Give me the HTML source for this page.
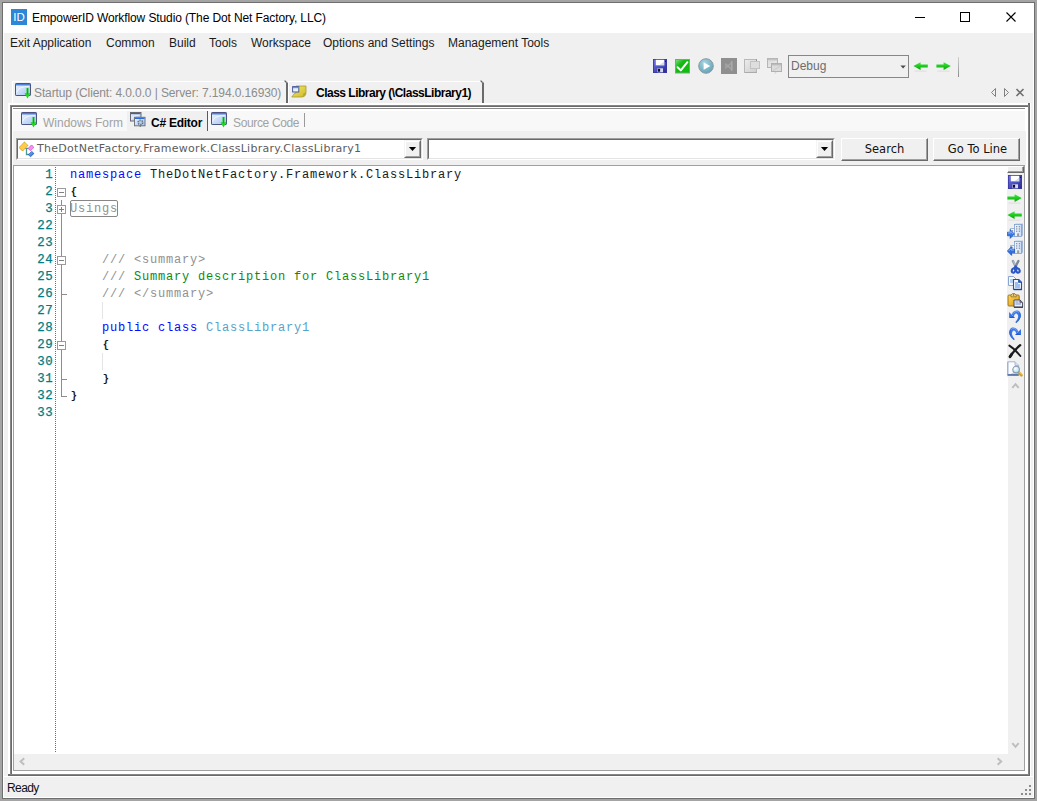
<!DOCTYPE html>
<html lang="en">
<head>
<meta charset="utf-8">
<title>EmpowerID Workflow Studio</title>
<style>
html,body{margin:0;padding:0;}
body{width:1037px;height:801px;overflow:hidden;background:#a4a4a4;position:relative;font-family:"Liberation Sans",sans-serif;font-size:12px;color:#000;}
.a{position:absolute;}
.t{position:absolute;white-space:nowrap;line-height:16px;}
#win{left:2px;top:2px;width:1033px;height:797px;background:#6e6e6e;}
#cli{left:3px;top:3px;width:1031px;height:795px;background:#fff;}
#bg{left:4px;top:33px;width:1029px;height:764px;background:#f0f0f0;}
.ui{font-family:"Liberation Sans",sans-serif;font-size:12px;}
.menu{top:35px;color:#1b1b1b;}
.code{font-family:"Liberation Mono",monospace;font-size:12px;letter-spacing:0.8px;line-height:17px;padding-top:1px;box-sizing:border-box;white-space:pre;position:absolute;left:70px;color:#1a1a1a;height:17px;}
.ln{font-family:"Liberation Mono",monospace;font-size:12.4px;letter-spacing:0.55px;line-height:17px;position:absolute;left:14px;width:39.3px;text-align:right;color:#007c82;height:17px;padding-top:1px;box-sizing:border-box;-webkit-text-stroke:0.25px #007c82;}
.br{display:inline-block;width:8px;font-size:10.5px;letter-spacing:0;text-align:center;position:relative;top:-0.5px;font-weight:bold;}
.kw{color:#0808ff;}
.cm{color:#919191;}
.gr{color:#0f8a0f;}
.ty{color:#58a2ca;}
.vd{font-family:"DejaVu Sans",sans-serif;}
</style>
</head>
<body>
<div id="win" class="a"></div>
<div id="cli" class="a"></div>
<div id="bg" class="a"></div>

<!-- title bar -->
<div class="a" style="left:11px;top:9px;width:16px;height:16px;background:#2d86d6;"></div>
<div class="t" style="left:12px;top:9px;width:14px;text-align:center;color:#fff;font-size:11.5px;line-height:17px;letter-spacing:0px;">ID</div>
<div class="t ui" id="title" style="left:32px;top:10px;letter-spacing:-0.11px;">EmpowerID Workflow Studio (The Dot Net Factory, LLC)</div>
<svg class="a" style="left:910px;top:7px;" width="112" height="22" viewBox="0 0 112 22">
 <path d="M5 10.5H15" stroke="#000" stroke-width="1" fill="none"/>
 <rect x="50.5" y="5.5" width="9" height="9" stroke="#000" stroke-width="1" fill="none"/>
 <path d="M96.5 5.5L105.5 14.5M105.5 5.5L96.5 14.5" stroke="#000" stroke-width="1.1" fill="none"/>
</svg>

<!-- menu -->
<div class="t ui menu" style="left:10px;">Exit Application</div>
<div class="t ui menu" style="left:106px;">Common</div>
<div class="t ui menu" style="left:169px;">Build</div>
<div class="t ui menu" style="left:209px;">Tools</div>
<div class="t ui menu" style="left:251px;">Workspace</div>
<div class="t ui menu" style="left:323px;">Options and Settings</div>
<div class="t ui menu" style="left:448px;">Management Tools</div>


<!-- outer document tab strip -->
<div class="a" style="left:12px;top:81px;width:274px;height:22px;background:#f2f2f2;border-left:1px solid #fff;border-top:1px solid #fff;box-sizing:border-box;"></div>
<div class="a" style="left:288px;top:81px;width:194px;height:22px;border-left:1px solid #fff;border-top:1px solid #fff;box-sizing:border-box;"></div>
<svg class="a" style="left:283px;top:79px;" width="6" height="25" viewBox="0 0 6 25"><path d="M1.6 1.6L3.6 3.6" stroke="#5a5a5a" stroke-width="1.3" fill="none"/><path d="M4 3.4V24" stroke="#6a6a6a" stroke-width="2" fill="none"/></svg>
<svg class="a" style="left:479px;top:79px;" width="6" height="25" viewBox="0 0 6 25"><path d="M1.6 1.6L3.6 3.6" stroke="#5a5a5a" stroke-width="1.3" fill="none"/><path d="M4 3.4V24" stroke="#6a6a6a" stroke-width="2" fill="none"/></svg>
<div class="t ui" id="tab1" style="left:34px;top:85px;color:#8c8c8c;letter-spacing:-0.11px;">Startup (Client: 4.0.0.0 | Server: 7.194.0.16930)</div>
<div class="t ui" id="tab2" style="left:316px;top:85px;font-weight:bold;color:#000;letter-spacing:-0.5px;">Class Library (\ClassLibrary1)</div>
<svg class="a" style="left:988px;top:86px;" width="40" height="14" viewBox="0 0 40 14">
 <path d="M7.5 2.5L3.5 6.5L7.5 10.5Z" stroke="#808080" stroke-width="1" fill="none"/>
 <path d="M16.5 2.5L20.5 6.5L16.5 10.5Z" stroke="#808080" stroke-width="1" fill="none"/>
 <path d="M28.5 3L35.5 10M35.5 3L28.5 10" stroke="#707070" stroke-width="1.6" fill="none"/>
</svg>

<!-- frames -->
<div class="a" style="left:8px;top:103px;width:1023px;height:674px;background:#fff;"></div>
<div class="a" style="left:10px;top:105px;width:1020px;height:671px;background:#6a6a6a;"></div>
<div class="a" style="left:10px;top:105px;width:1px;height:670px;background:#868686;"></div>
<div class="a" style="left:10px;top:105px;width:1019px;height:1px;background:#868686;"></div>
<div class="a" style="left:1028px;top:106px;width:1px;height:669px;background:#868686;"></div>
<div class="a" style="left:11px;top:774px;width:1018px;height:1px;background:#868686;"></div>
<div class="a" style="left:12px;top:107px;width:1016px;height:667px;background:#fff;"></div>
<div class="a" style="left:1028px;top:103px;width:2px;height:2px;background:#6e6e6e;"></div>
<div class="a" style="left:8px;top:774px;width:2px;height:2px;background:#6e6e6e;"></div>
<div class="a" style="left:13px;top:108px;width:1012px;height:1px;background:#8a8a8a;"></div>
<div class="a" style="left:13px;top:111px;width:1012px;height:20px;background:#f8f8f8;"></div>
<div class="a" style="left:13px;top:131px;width:1013px;height:34px;background:#f0f0f0;"></div>
<div class="a" style="left:13px;top:165px;width:1012px;height:606px;background:#a0a0a0;"></div>
<div class="a" style="left:14px;top:166px;width:1010px;height:604px;background:#fff;"></div>
<div class="a" style="left:1008px;top:166px;width:16px;height:604px;background:#f0f0f0;"></div>
<div class="a" style="left:1007px;top:166px;width:17px;height:211px;background:#f0f0f0;"></div>
<div class="a" style="left:14px;top:754px;width:1010px;height:16px;background:#f0f0f0;"></div>

<!-- inner tabs -->
<div class="a" style="left:127px;top:111px;width:80px;height:20px;background:#f0f0f0;"></div>
<div class="a" style="left:207px;top:111px;width:1px;height:20px;background:#5a5a5a;"></div>
<div class="a" style="left:304px;top:113px;width:1px;height:14px;background:#9a9a9a;"></div>
<div class="t ui" id="it1" style="left:43px;top:115px;color:#a2a2a2;">Windows Form</div>
<div class="t ui" id="it2" style="left:151px;top:115px;font-weight:bold;color:#000;letter-spacing:-0.25px;">C# Editor</div>
<div class="t ui" id="it3" style="left:233px;top:115px;color:#a2a2a2;letter-spacing:-0.35px;">Source Code</div>


<!-- combos & buttons -->
<div class="a" style="left:16px;top:138px;width:407px;height:22px;background:#fff;box-sizing:border-box;border-top:1px solid #a0a0a0;border-left:1px solid #a0a0a0;border-right:1px solid #fff;border-bottom:1px solid #fff;"></div>
<div class="a" style="left:17px;top:139px;width:405px;height:20px;background:#fff;box-sizing:border-box;border-top:1px solid #696969;border-left:1px solid #696969;border-right:1px solid #e3e3e3;border-bottom:1px solid #e3e3e3;"></div>
<div class="a" style="left:404px;top:140px;width:17px;height:18px;background:#f0f0f0;box-sizing:border-box;border-top:1px solid #f4f4f4;border-left:1px solid #f4f4f4;border-right:1px solid #696969;border-bottom:1px solid #696969;"></div>
<div class="a" style="left:405px;top:141px;width:15px;height:16px;box-sizing:border-box;border-top:1px solid #fff;border-left:1px solid #fff;border-right:1px solid #a0a0a0;border-bottom:1px solid #a0a0a0;"></div>
<svg class="a" style="left:408px;top:146px;" width="9" height="6" viewBox="0 0 9 6"><path d="M0.9 1H8.1L4.5 5Z" fill="#000"/></svg>
<div class="t vd" id="cb1" style="left:37px;top:141px;font-size:11px;letter-spacing:0.28px;color:#5c5c5c;">TheDotNetFactory.Framework.ClassLibrary.ClassLibrary1</div>

<div class="a" style="left:427px;top:138px;width:408px;height:22px;background:#fff;box-sizing:border-box;border-top:1px solid #a0a0a0;border-left:1px solid #a0a0a0;border-right:1px solid #fff;border-bottom:1px solid #fff;"></div>
<div class="a" style="left:428px;top:139px;width:406px;height:20px;background:#fff;box-sizing:border-box;border-top:1px solid #696969;border-left:1px solid #696969;border-right:1px solid #e3e3e3;border-bottom:1px solid #e3e3e3;"></div>
<div class="a" style="left:816px;top:140px;width:17px;height:18px;background:#f0f0f0;box-sizing:border-box;border-top:1px solid #f4f4f4;border-left:1px solid #f4f4f4;border-right:1px solid #696969;border-bottom:1px solid #696969;"></div>
<div class="a" style="left:817px;top:141px;width:15px;height:16px;box-sizing:border-box;border-top:1px solid #fff;border-left:1px solid #fff;border-right:1px solid #a0a0a0;border-bottom:1px solid #a0a0a0;"></div>
<svg class="a" style="left:820px;top:146px;" width="9" height="6" viewBox="0 0 9 6"><path d="M0.9 1H8.1L4.5 5Z" fill="#000"/></svg>

<div class="a" style="left:841px;top:138px;width:87px;height:23px;background:#f0f0f0;box-sizing:border-box;border-top:1px solid #fff;border-left:1px solid #fff;border-right:1px solid #696969;border-bottom:1px solid #696969;"></div>
<div class="a" style="left:842px;top:139px;width:85px;height:21px;box-sizing:border-box;border-right:1px solid #a0a0a0;border-bottom:1px solid #a0a0a0;"></div>
<div class="t vd" id="b1" style="left:841px;top:141px;width:87px;text-align:center;font-size:11.5px;color:#111;"><span id="s1">Search</span></div>
<div class="a" style="left:933px;top:138px;width:87px;height:23px;background:#f0f0f0;box-sizing:border-box;border-top:1px solid #fff;border-left:1px solid #fff;border-right:1px solid #696969;border-bottom:1px solid #696969;"></div>
<div class="a" style="left:934px;top:139px;width:85px;height:21px;box-sizing:border-box;border-right:1px solid #a0a0a0;border-bottom:1px solid #a0a0a0;"></div>
<div class="t vd" id="b2" style="left:934px;top:141px;width:87px;text-align:center;font-size:11.5px;color:#111;"><span id="s2">Go To Line</span></div>

<!-- editor -->
<div class="a" style="left:55px;top:167px;width:1px;height:586px;background:repeating-linear-gradient(to bottom,#1f8f95 0,#1f8f95 1px,#fff 1px,#fff 2px);"></div>
<div class="a" style="left:61px;top:200px;width:1px;height:197px;background:#8c8c8c;"></div>
<div class="a" style="left:61px;top:396px;width:6px;height:1px;background:#8c8c8c;"></div>
<div class="a" style="left:61px;top:294px;width:6px;height:1px;background:#8c8c8c;"></div>
<div class="a" style="left:61px;top:379px;width:6px;height:1px;background:#8c8c8c;"></div>
<div class="a" style="left:102px;top:302px;width:1px;height:17px;background:#e4e4e4;"></div>
<div class="a" style="left:102px;top:353px;width:1px;height:17px;background:#e4e4e4;"></div>
<svg class="a" style="left:57px;top:188px;" width="9" height="9" viewBox="0 0 9 9"><rect x="0.5" y="0.5" width="8" height="8" fill="#fff" stroke="#9a9a9a"/><path d="M2 4.5H7" stroke="#808080" stroke-width="1" fill="none"/></svg>
<svg class="a" style="left:57px;top:205px;" width="9" height="9" viewBox="0 0 9 9"><rect x="0.5" y="0.5" width="8" height="8" fill="#fff" stroke="#9a9a9a"/><path d="M2 4.5H7M4.5 2V7" stroke="#808080" stroke-width="1" fill="none"/></svg>
<svg class="a" style="left:57px;top:256px;" width="9" height="9" viewBox="0 0 9 9"><rect x="0.5" y="0.5" width="8" height="8" fill="#fff" stroke="#9a9a9a"/><path d="M2 4.5H7" stroke="#808080" stroke-width="1" fill="none"/></svg>
<svg class="a" style="left:57px;top:341px;" width="9" height="9" viewBox="0 0 9 9"><rect x="0.5" y="0.5" width="8" height="8" fill="#fff" stroke="#9a9a9a"/><path d="M2 4.5H7" stroke="#808080" stroke-width="1" fill="none"/></svg>
<div class="ln" style="top:166px;">1</div>
<div class="code" style="top:166px;"><span class="kw">namespace</span> TheDotNetFactory.Framework.ClassLibrary</div>
<div class="ln" style="top:183px;">2</div>
<div class="code" style="top:183px;"><span class="br">{</span></div>
<div class="ln" style="top:200px;">3</div>
<div class="ln" style="top:217px;">22</div>
<div class="ln" style="top:234px;">23</div>
<div class="ln" style="top:251px;">24</div>
<div class="code" style="top:251px;">    <span class="cm">/// &lt;summary&gt;</span></div>
<div class="ln" style="top:268px;">25</div>
<div class="code" style="top:268px;">    <span class="cm">///</span><span class="gr"> Summary description for ClassLibrary1</span></div>
<div class="ln" style="top:285px;">26</div>
<div class="code" style="top:285px;">    <span class="cm">/// &lt;/summary&gt;</span></div>
<div class="ln" style="top:302px;">27</div>
<div class="ln" style="top:319px;">28</div>
<div class="code" style="top:319px;">    <span class="kw">public class</span> <span class="ty">ClassLibrary1</span></div>
<div class="ln" style="top:336px;">29</div>
<div class="code" style="top:336px;">    <span class="br">{</span></div>
<div class="ln" style="top:353px;">30</div>
<div class="ln" style="top:370px;">31</div>
<div class="code" style="top:370px;">    <span class="br">}</span></div>
<div class="ln" style="top:387px;">32</div>
<div class="code" style="top:387px;"><span class="br">}</span></div>
<div class="ln" style="top:404px;">33</div>
<div class="a" style="left:70px;top:200px;width:48px;height:17px;box-sizing:border-box;border:1px solid #868686;border-radius:2px;"></div>
<div class="code cm" style="top:200px;left:70px;">Usings</div>
<svg class="a" style="left:1007px;top:377px;" width="17" height="17" viewBox="0 0 17 17"><path d="M5.3 10.8L8.5 7.2L11.7 10.8" stroke="#bebebe" stroke-width="2" fill="none"/></svg>
<svg class="a" style="left:1007px;top:736px;" width="17" height="17" viewBox="0 0 17 17"><path d="M5.3 7.2L8.5 10.8L11.7 7.2" stroke="#bebebe" stroke-width="2" fill="none"/></svg>
<svg class="a" style="left:14px;top:753px;" width="17" height="17" viewBox="0 0 17 17"><path d="M10.2 5.3L6.6 8.5L10.2 11.7" stroke="#bebebe" stroke-width="2" fill="none"/></svg>
<svg class="a" style="left:991px;top:753px;" width="17" height="17" viewBox="0 0 17 17"><path d="M6.6 5.3L10.2 8.5L6.6 11.7" stroke="#bebebe" stroke-width="2" fill="none"/></svg>
<div class="a" style="left:1007px;top:166px;width:17px;height:7px;background:#f0f0f0;box-sizing:border-box;border-top:1px solid #fff;border-left:1px solid #fff;border-right:1px solid #696969;border-bottom:1px solid #696969;"></div>
<div class="a" style="left:1008px;top:167px;width:15px;height:5px;box-sizing:border-box;border-right:1px solid #a0a0a0;border-bottom:1px solid #a0a0a0;"></div>
<svg class="a" style="left:1020px;top:784px;" width="13" height="13" viewBox="0 0 13 13"><rect x="9" y="1" width="2" height="2" fill="#8c8c8c"/><rect x="11" y="3" width="1" height="1" fill="#fff" opacity="0"/><rect x="5" y="5" width="2" height="2" fill="#8c8c8c"/><rect x="7" y="7" width="1" height="1" fill="#fff" opacity="0"/><rect x="9" y="5" width="2" height="2" fill="#8c8c8c"/><rect x="11" y="7" width="1" height="1" fill="#fff" opacity="0"/><rect x="1" y="9" width="2" height="2" fill="#8c8c8c"/><rect x="3" y="11" width="1" height="1" fill="#fff" opacity="0"/><rect x="5" y="9" width="2" height="2" fill="#8c8c8c"/><rect x="7" y="11" width="1" height="1" fill="#fff" opacity="0"/><rect x="9" y="9" width="2" height="2" fill="#8c8c8c"/><rect x="11" y="11" width="1" height="1" fill="#fff" opacity="0"/></svg>

<!-- icons-start -->
<svg class="a" style="left:653px;top:59px;" width="14" height="14" viewBox="0 0 14 14"><defs><linearGradient id="g1" x1="0" y1="0" x2="1" y2="1"><stop offset="0" stop-color="#7878ea"/><stop offset="1" stop-color="#26268a"/></linearGradient></defs>
<rect x="0" y="0" width="14" height="14" fill="url(#g1)"/>
<rect x="0.4" y="0.4" width="13.2" height="13.2" fill="none" stroke="#3838a4" stroke-width=".8"/>
<rect x="2.8" y="0.8" width="8.4" height="5.8" fill="#fff"/>
<path d="M6 6.4L11.2 2.5V6.4Z" fill="#d4dcf0"/>
<rect x="2.8" y="6.5" width="8.4" height=".9" fill="#4466dc"/>
<rect x="4.4" y="9.3" width="5.6" height="4" fill="#d6d8e8"/>
<rect x="4.9" y="9.8" width="2.2" height="2.9" fill="#0c0c30"/>
<rect x="12" y="1.6" width="1" height="1.4" fill="#161658"/></svg>
<svg class="a" style="left:675px;top:58.5px;" width="15" height="15" viewBox="0 0 15 15"><defs><linearGradient id="g2" x1="0" y1="0" x2="1" y2="1"><stop offset="0" stop-color="#8be08b"/><stop offset=".35" stop-color="#14b814"/><stop offset="1" stop-color="#0bbf0b"/></linearGradient></defs>
<rect x="0.5" y="0.5" width="14" height="13.5" fill="url(#g2)" stroke="#6fae6f" stroke-width="1"/>
<path d="M2.6 8.2L5.8 11.4L12.4 3.2" stroke="#fff" stroke-width="2" fill="none" stroke-linecap="round" stroke-linejoin="round"/></svg>
<svg class="a" style="left:698px;top:58px;" width="16" height="16" viewBox="0 0 16 16"><defs><radialGradient id="g3" cx=".4" cy=".3" r=".8"><stop offset="0" stop-color="#a8d4e0"/><stop offset="1" stop-color="#5a9eb4"/></radialGradient></defs>
<circle cx="8" cy="8" r="7.3" fill="url(#g3)" stroke="#8a9aa2" stroke-width="1"/>
<path d="M5.6 4.2L12.2 8L5.6 11.8Z" fill="#fff"/></svg>
<svg class="a" style="left:721px;top:58px;" width="16" height="16" viewBox="0 0 16 16"><rect x="0" y="0" width="16" height="16" fill="#8f8f8f"/>
<path d="M9.8 2.8L11.6 3.6V12.4L9.8 13.2Z" fill="#a9a9a9"/>
<path d="M4.4 5.8L10 10.8M4.4 10.2L10 5.2" stroke="#a6a6a6" stroke-width="1.3" fill="none"/>
<path d="M4.4 5.6V10.4" stroke="#a0a0a0" stroke-width=".9" fill="none"/></svg>
<svg class="a" style="left:744px;top:59px;" width="17" height="15" viewBox="0 0 17 15"><defs><linearGradient id="g4" x1="0" y1="0" x2="1" y2="1"><stop offset="0" stop-color="#ededed"/><stop offset="1" stop-color="#cdcdcd"/></linearGradient></defs>
<rect x="0.5" y="0.5" width="12" height="13" fill="url(#g4)" stroke="#b8b8b8"/>
<rect x="1" y="13" width="12" height="1" fill="#ababab"/>
<rect x="12" y="0.4" width="1" height="2" fill="#8e8e8e"/>
<rect x="6.5" y="2.5" width="9" height="7" fill="#dedede" stroke="#c2c2c2"/></svg>
<svg class="a" style="left:767px;top:58px;" width="16" height="16" viewBox="0 0 16 16"><rect x="0.5" y="0.5" width="10" height="9" fill="#e0e0e0" stroke="#b6b6b6"/>
<rect x="1" y="1" width="9" height="1.4" fill="#c2c2c2"/>
<path d="M1.5 8L9 3.4" stroke="#ececec" stroke-width="1"/>
<rect x="4.5" y="5.5" width="10" height="8" fill="#dcdcdc" stroke="#b0b0b0"/>
<rect x="5" y="6" width="9" height="1.4" fill="#bcbcbc"/>
<path d="M6 12.5L13.4 8.2" stroke="#cacaca" stroke-width="1"/>
<path d="M7.6 15.4L9.4 14.2" stroke="#c8c8c8" stroke-width="1"/></svg>
<div class="a" style="left:788px;top:55px;width:121px;height:23px;box-sizing:border-box;border:1px solid #878787;background:#f0f0f0;"></div>
<div class="t ui" id="dbg" style="left:791px;top:58px;color:#6d6d6d;font-size:12px;">Debug</div>
<svg class="a" style="left:899.5px;top:64.6px;" width="7" height="5" viewBox="0 0 7 5"><path d="M0.4 0.5H5.8L3.1 3.6Z" fill="#4c4c4c"/></svg>
<svg class="a" style="left:912.8px;top:60.8px;" width="15.2" height="11" viewBox="0 0 15.2 11"><defs><linearGradient id="g5" x1="0" y1="0" x2="0" y2="1"><stop offset="0" stop-color="#3fe83f"/><stop offset=".5" stop-color="#1ccc1c"/><stop offset="1" stop-color="#0aa00a"/></linearGradient></defs>
<path d="M14.8 3.6H7.6V1.2L0.4 5L7.6 8.9V6.4H14.8Z" fill="url(#g5)"/>
<rect x="1.5" y="9.6" width="12" height="1" fill="#dcdcdc"/></svg>
<svg class="a" style="left:936px;top:60.8px;" width="15.2" height="11" viewBox="0 0 15.2 11"><defs><linearGradient id="g6" x1="0" y1="0" x2="0" y2="1"><stop offset="0" stop-color="#3fe83f"/><stop offset=".5" stop-color="#1ccc1c"/><stop offset="1" stop-color="#0aa00a"/></linearGradient></defs>
<path d="M0.4 3.6H7.6V1.2L14.8 5L7.6 8.9V6.4H0.4Z" fill="url(#g6)"/>
<rect x="1.5" y="9.6" width="12" height="1" fill="#dcdcdc"/></svg>
<div class="a" style="left:958px;top:57px;width:1px;height:20px;background:linear-gradient(#d0d0d0,#8c8c8c);"></div>
<svg class="a" style="left:15px;top:83px;" width="17" height="16" viewBox="0 0 17 16"><defs><linearGradient id="g7" x1="0" y1="0" x2="1" y2="1"><stop offset="0" stop-color="#f0f5fe"/><stop offset="1" stop-color="#a2c3f4"/></linearGradient></defs>
<rect x="0.5" y="0.5" width="15" height="12" rx="0.6" fill="url(#g7)" stroke="#4c5384"/>
<rect x="1" y="1" width="14" height="1.5" fill="#4d80da"/>
<path d="M1.6 9.6C2.6 5.4 7 3.6 14 3.4" stroke="#fff" stroke-opacity=".75" stroke-width="1" fill="none"/>
<path d="M11.5 5h2v5.3h2l-3 5.2l-3-5.2h2z" fill="#22d422"/>
<path d="M12.5 5.2v6" stroke="#10aa10" stroke-width="1.1"/></svg>
<svg class="a" style="left:291px;top:84.5px;" width="16" height="13" viewBox="0 0 16 13"><defs><linearGradient id="g8" x1="0" y1="0" x2="1" y2="1"><stop offset="0" stop-color="#f6ea6a"/><stop offset="1" stop-color="#cdb82a"/></linearGradient></defs>
<path d="M5 1H15V7.5C15 10.5 13 12 10.5 12H0.8L3.6 8.2H5Z" fill="url(#g8)" stroke="#a89a30" stroke-width=".8"/>
<path d="M10.5 12C12 11.2 12.6 10 12.4 8.6L15 7.5C15 10.5 13 12 10.5 12Z" fill="#b9a62c"/>
<rect x="1.6" y="1.6" width="6.2" height="5.4" fill="#e9f0fc" stroke="#4a5a9a" stroke-width="1"/>
<rect x="2" y="2" width="5.4" height="1.2" fill="#6c8cd8"/></svg>
<svg class="a" style="left:21px;top:112px;" width="17" height="16" viewBox="0 0 17 16"><defs><linearGradient id="g9" x1="0" y1="0" x2="1" y2="1"><stop offset="0" stop-color="#f0f5fe"/><stop offset="1" stop-color="#a2c3f4"/></linearGradient></defs>
<rect x="0.5" y="0.5" width="15" height="12" rx="0.6" fill="url(#g9)" stroke="#4c5384"/>
<rect x="1" y="1" width="14" height="1.5" fill="#4d80da"/>
<path d="M1.6 9.6C2.6 5.4 7 3.6 14 3.4" stroke="#fff" stroke-opacity=".75" stroke-width="1" fill="none"/>
<path d="M11.5 5h2v5.3h2l-3 5.2l-3-5.2h2z" fill="#22d422"/>
<path d="M12.5 5.2v6" stroke="#10aa10" stroke-width="1.1"/></svg>
<svg class="a" style="left:130.3px;top:112.2px;" width="16" height="16" viewBox="0 0 16 16"><defs><linearGradient id="g10" x1="0" y1="0" x2="1" y2="1"><stop offset="0" stop-color="#f2f6fe"/><stop offset="1" stop-color="#9cc0f4"/></linearGradient></defs>
<rect x="0.5" y="0.5" width="10.5" height="8.5" fill="url(#g10)" stroke="#6a6a74"/>
<rect x="1" y="1" width="9.5" height="1.2" fill="#565a84"/>
<path d="M1.6 7.4C2.4 4.6 5 3.4 9.6 3.2" stroke="#fff" stroke-opacity=".7" stroke-width=".9" fill="none"/>
<rect x="4.5" y="5.3" width="10.5" height="8.5" fill="url(#g10)" stroke="#74747c"/>
<rect x="5" y="5.7" width="9.5" height="1.3" fill="#2f6ce0"/>
<circle cx="10.4" cy="10.4" r="2.3" fill="#c4dcfb" stroke="#5c666c" stroke-width="1.4" stroke-dasharray="1.3 .9"/>
<circle cx="10.4" cy="10.4" r="1.5" fill="#b4d2fa" stroke="#8a9498" stroke-width=".5"/>
<path d="M10.2 13.6v1.4" stroke="#5a6a6a" stroke-width="1"/></svg>
<svg class="a" style="left:211px;top:112px;" width="17" height="16" viewBox="0 0 17 16"><defs><linearGradient id="g11" x1="0" y1="0" x2="1" y2="1"><stop offset="0" stop-color="#f0f5fe"/><stop offset="1" stop-color="#a2c3f4"/></linearGradient></defs>
<rect x="0.5" y="0.5" width="15" height="12" rx="0.6" fill="url(#g11)" stroke="#4c5384"/>
<rect x="1" y="1" width="14" height="1.5" fill="#4d80da"/>
<path d="M1.6 9.6C2.6 5.4 7 3.6 14 3.4" stroke="#fff" stroke-opacity=".75" stroke-width="1" fill="none"/>
<path d="M11.5 5h2v5.3h2l-3 5.2l-3-5.2h2z" fill="#22d422"/>
<path d="M12.5 5.2v6" stroke="#10aa10" stroke-width="1.1"/></svg>
<svg class="a" style="left:19px;top:141px;" width="16" height="17" viewBox="0 0 16 17"><defs><linearGradient id="g12" x1="0" y1="0" x2="1" y2="1"><stop offset="0" stop-color="#74ccff"/><stop offset="1" stop-color="#1c58cc"/></linearGradient></defs>
<path d="M6.2 7.3H9.6M7.5 7.3V13.5H10" stroke="#4a9a96" stroke-width="1.3" fill="none"/>
<path d="M5.4 1L9 4.4L3.6 10.1L0 6.5Z" fill="#ffcc48" stroke="#c08a12" stroke-width="1" stroke-dasharray="1 .6"/>
<path d="M12.5 3.9L15 6.4L11.4 9.6L9.1 7.5Z" fill="#f68cf6" stroke="#c23cc2" stroke-width=".9" stroke-dasharray="1 .5"/>
<path d="M12.7 10.3L15 12.5L11.4 15.8L9.6 13.7Z" fill="url(#g12)" stroke="#1440b0" stroke-width=".9" stroke-dasharray="1 .5"/></svg>
<svg class="a" style="left:1008px;top:175px;" width="14" height="14" viewBox="0 0 14 14"><defs><linearGradient id="g13" x1="0" y1="0" x2="1" y2="1"><stop offset="0" stop-color="#7878ea"/><stop offset="1" stop-color="#26268a"/></linearGradient></defs>
<rect x="0" y="0" width="14" height="14" fill="url(#g13)"/>
<rect x="0.4" y="0.4" width="13.2" height="13.2" fill="none" stroke="#3838a4" stroke-width=".8"/>
<rect x="2.8" y="0.8" width="8.4" height="5.8" fill="#fff"/>
<path d="M6 6.4L11.2 2.5V6.4Z" fill="#d4dcf0"/>
<rect x="2.8" y="6.5" width="8.4" height=".9" fill="#4466dc"/>
<rect x="4.4" y="9.3" width="5.6" height="4" fill="#d6d8e8"/>
<rect x="4.9" y="9.8" width="2.2" height="2.9" fill="#0c0c30"/>
<rect x="12" y="1.6" width="1" height="1.4" fill="#161658"/></svg>
<svg class="a" style="left:1007.2px;top:192.8px;" width="15.2" height="11" viewBox="0 0 15.2 11"><defs><linearGradient id="g14" x1="0" y1="0" x2="0" y2="1"><stop offset="0" stop-color="#3fe83f"/><stop offset=".5" stop-color="#1ccc1c"/><stop offset="1" stop-color="#0aa00a"/></linearGradient></defs>
<path d="M0.4 3.6H7.6V1.2L14.8 5L7.6 8.9V6.4H0.4Z" fill="url(#g14)"/>
<rect x="1.5" y="9.6" width="12" height="1" fill="#dcdcdc"/></svg>
<svg class="a" style="left:1007.2px;top:209.9px;" width="15.2" height="11" viewBox="0 0 15.2 11"><defs><linearGradient id="g15" x1="0" y1="0" x2="0" y2="1"><stop offset="0" stop-color="#3fe83f"/><stop offset=".5" stop-color="#1ccc1c"/><stop offset="1" stop-color="#0aa00a"/></linearGradient></defs>
<path d="M14.8 3.6H7.6V1.2L0.4 5L7.6 8.9V6.4H14.8Z" fill="url(#g15)"/>
<rect x="1.5" y="9.6" width="12" height="1" fill="#dcdcdc"/></svg>
<svg class="a" style="left:1007px;top:223.4px;" width="16" height="16" viewBox="0 0 16 16"><defs><linearGradient id="g16" x1="0" y1="0" x2="1" y2="0"><stop offset="0" stop-color="#f4f8ff"/><stop offset="1" stop-color="#cfe0f6"/></linearGradient></defs>
<path d="M3.5 5.5H8V13.5H3.5Z" fill="#f2f6fd" stroke="#8aa8d6" stroke-width=".8"/>
<path d="M7.5 1.5L8.8 0.4H15.6L14.6 1.5Z" fill="#b8cdea"/>
<path d="M14.5 1.5L15.6 0.4V12.4L14.5 13.5Z" fill="#6f92c8"/>
<rect x="7.5" y="1.5" width="7" height="12" fill="url(#g16)" stroke="#7d9fd2" stroke-width=".8"/>
<g fill="#8a95a6"><rect x="9" y="3" width="1.3" height="1.3"/><rect x="11.8" y="3" width="1.3" height="1.3"/><rect x="9" y="5.3" width="1.3" height="1.3"/><rect x="11.8" y="5.3" width="1.3" height="1.3"/><rect x="9" y="7.6" width="1.3" height="1.3"/><rect x="11.8" y="7.6" width="1.3" height="1.3"/><rect x="5" y="7.2" width="1.2" height="1.2"/></g>
<rect x="10.1" y="10.4" width="2" height="3.1" fill="#9a9aa0"/>
<path d="M0.4 9.2H3.2V6.6L7.4 11L3.2 15.4V12.8H0.4Z" fill="#3a78e6" stroke="#1e4eb4" stroke-width=".7"/><path d="M1 10H3.8V8.4L6.2 11" stroke="#9cc0fa" stroke-width=".8" fill="none"/></svg>
<svg class="a" style="left:1007px;top:240.4px;" width="16" height="16" viewBox="0 0 16 16"><defs><linearGradient id="g17" x1="0" y1="0" x2="1" y2="0"><stop offset="0" stop-color="#f4f8ff"/><stop offset="1" stop-color="#cfe0f6"/></linearGradient></defs>
<path d="M3.5 5.5H8V13.5H3.5Z" fill="#f2f6fd" stroke="#8aa8d6" stroke-width=".8"/>
<path d="M7.5 1.5L8.8 0.4H15.6L14.6 1.5Z" fill="#b8cdea"/>
<path d="M14.5 1.5L15.6 0.4V12.4L14.5 13.5Z" fill="#6f92c8"/>
<rect x="7.5" y="1.5" width="7" height="12" fill="url(#g17)" stroke="#7d9fd2" stroke-width=".8"/>
<g fill="#8a95a6"><rect x="9" y="3" width="1.3" height="1.3"/><rect x="11.8" y="3" width="1.3" height="1.3"/><rect x="9" y="5.3" width="1.3" height="1.3"/><rect x="11.8" y="5.3" width="1.3" height="1.3"/><rect x="9" y="7.6" width="1.3" height="1.3"/><rect x="11.8" y="7.6" width="1.3" height="1.3"/><rect x="5" y="7.2" width="1.2" height="1.2"/></g>
<rect x="10.1" y="10.4" width="2" height="3.1" fill="#9a9aa0"/>
<path d="M7.6 9.2H4.6V6.6L0.4 11L4.6 15.4V12.8H7.6Z" fill="#2f6fe2" stroke="#1e4eb4" stroke-width=".7"/><path d="M7 10H4V8.6L1.6 11" stroke="#9cc0fa" stroke-width=".8" fill="none"/></svg>
<svg class="a" style="left:1007px;top:258px;" width="17" height="17" viewBox="0 0 17 17"><path d="M5.9 3L9.4 10" stroke="#929cac" stroke-width="2.4" fill="none" stroke-linecap="round"/>
<path d="M11.4 3L7.8 10" stroke="#7e8898" stroke-width="2.4" fill="none" stroke-linecap="round"/>
<path d="M6.4 3.4L9 8.6" stroke="#c4ccd8" stroke-width=".8" fill="none"/>
<ellipse cx="6.5" cy="12.6" rx="1.7" ry="2.1" fill="#f4f6ff" stroke="#2c58c4" stroke-width="2.1" transform="rotate(20 6.5 12.6)"/>
<ellipse cx="10.9" cy="12.6" rx="1.7" ry="2.1" fill="#f4f6ff" stroke="#2c58c4" stroke-width="2.1" transform="rotate(-20 10.9 12.6)"/>
<path d="M7 10.6L8.7 8.4L10.4 10.6" stroke="#2c58c4" stroke-width="2" fill="none"/></svg>
<svg class="a" style="left:1007px;top:275.6px;" width="16" height="16" viewBox="0 0 16 16"><path d="M1.5 0.5H6.5L9.5 3.5V9.5H1.5Z" fill="#f4f8ff" stroke="#7f9ccc" stroke-width=".9"/>
<path d="M3 4H7M3 6H7" stroke="#78a4e6" stroke-width="1"/>
<path d="M6.5 3.5H11.8L14.5 6.2V13.2H6.5Z" fill="#f2f7ff" stroke="#2450b0" stroke-width="1.1"/>
<path d="M11.5 3.8V6.4H14.2" fill="#2450b0" stroke="#2450b0" stroke-width=".8"/>
<path d="M8 7H11M8 9H13M8 11H13" stroke="#4f86e0" stroke-width="1.1"/>
<rect x="6.8" y="13" width="8" height="1.2" fill="#1c3f9a"/></svg>
<svg class="a" style="left:1007px;top:292px;" width="17" height="17" viewBox="0 0 17 17"><defs><linearGradient id="g18" x1="0" y1="0" x2="1" y2="1"><stop offset="0" stop-color="#ffd85a"/><stop offset="1" stop-color="#d89a12"/></linearGradient></defs>
<rect x="1" y="3" width="11.2" height="11" rx="1" fill="url(#g18)" stroke="#9a6c10" stroke-width=".9"/>
<path d="M4 4.8V3.2L5.4 1.6H7.8L9.2 3.2V4.8Z" fill="#f2d890" stroke="#8a6a2a" stroke-width=".8"/>
<circle cx="6.6" cy="3" r=".8" fill="#7a5a1a"/>
<path d="M7 8H13L15.6 10.4V15.2H7Z" fill="#eef2fa" stroke="#4a4a5a" stroke-width="1"/>
<path d="M8.4 10H11.6M8.4 12H14" stroke="#6f8fcc" stroke-width="1.1"/>
<path d="M12.8 8.2V10.6H15.4" fill="#6a6a7a" stroke="#4a4a5a" stroke-width=".6"/>
<rect x="7" y="14.6" width="9" height="1.2" fill="#3a3a44"/></svg>
<svg class="a" style="left:1007px;top:309px;" width="16" height="16" viewBox="0 0 16 16"><path d="M4.6 5.6C6 1.8 10.6 0.2 12.9 3C15.2 6 13.6 10.6 9.3 14L8.2 13.2C11.2 10 11.8 7.2 10.4 5.2C9.2 3.6 7.6 4.8 6.8 7.6Z" fill="#3b78e8"/>
<path d="M2.1 3.1V8.9H7.9Z" fill="#3574e6"/>
<path d="M2.1 8.9H7.9L6 7Z" fill="#2258cc"/>
<path d="M5.6 5.2C7 2.6 10.4 1.4 12 3.6" stroke="#86b0f6" stroke-width=".9" fill="none"/>
<path d="M12.6 4.4C14.2 7 12.6 10.6 9 13.6" stroke="#2a5ed0" stroke-width=".9" fill="none"/></svg>
<svg class="a" style="left:1007px;top:325.8px;" width="17" height="16" viewBox="0 0 17 16"><g transform="translate(16.1,0) scale(-1,1)"><path d="M4.6 5.6C6 1.8 10.6 0.2 12.9 3C15.2 6 13.6 10.6 9.3 14L8.2 13.2C11.2 10 11.8 7.2 10.4 5.2C9.2 3.6 7.6 4.8 6.8 7.6Z" fill="#3b78e8"/>
<path d="M2.1 3.1V8.9H7.9Z" fill="#3574e6"/>
<path d="M2.1 8.9H7.9L6 7Z" fill="#2258cc"/>
<path d="M5.6 5.2C7 2.6 10.4 1.4 12 3.6" stroke="#86b0f6" stroke-width=".9" fill="none"/>
<path d="M12.6 4.4C14.2 7 12.6 10.6 9 13.6" stroke="#2a5ed0" stroke-width=".9" fill="none"/></g></svg>
<svg class="a" style="left:1007px;top:343.4px;" width="16" height="16" viewBox="0 0 16 16"><path d="M2.4 2.6C6 4.8 9.8 8.6 13.4 13" stroke="#1c1c1c" stroke-width="1.9" fill="none" stroke-linecap="round"/>
<path d="M13.2 2.2C9.4 5.4 6 9.2 3 13.6" stroke="#1c1c1c" stroke-width="2.3" fill="none" stroke-linecap="round"/>
<path d="M4.8 11L3 13.8" stroke="#1c1c1c" stroke-width="2.8" fill="none" stroke-linecap="round"/></svg>
<svg class="a" style="left:1007px;top:360.5px;" width="17" height="17" viewBox="0 0 17 17"><defs><radialGradient id="g19" cx=".4" cy=".35" r=".7"><stop offset="0" stop-color="#ffffff"/><stop offset="1" stop-color="#9fdcf2"/></radialGradient></defs>
<path d="M0.8 0.8H8L11.6 4.4V13.6H0.8Z" fill="#fbfcff" stroke="#8fa6cc" stroke-width=".8"/>
<path d="M0.8 13.6C4.4 13.2 8 11 11.4 6.6V13.6Z" fill="#c4d4ec"/>
<path d="M0.5 14H11.8" stroke="#2c4e8c" stroke-width="1.3"/>
<path d="M0.8 1V14" stroke="#8098c4" stroke-width=".6"/>
<path d="M8 0.8V4.4H11.6" fill="#d8e2f4" stroke="#8fa6cc" stroke-width=".7"/>
<path d="M11.4 11.2L14.4 14.2" stroke="#dca020" stroke-width="2.8" stroke-linecap="round"/>
<path d="M12.2 11L14.8 13.6" stroke="#f4c85a" stroke-width=".8" stroke-linecap="round"/>
<circle cx="9.1" cy="8.6" r="3.3" fill="url(#g19)" stroke="#8c98ac" stroke-width="1.1"/></svg>
<!-- icons-end -->

<!-- status -->
<div class="a" style="left:4px;top:776px;width:1029px;height:1px;background:#fff;"></div>
<div class="t ui" style="left:7px;top:780px;color:#111;letter-spacing:-0.6px;">Ready</div>

</body>
</html>
